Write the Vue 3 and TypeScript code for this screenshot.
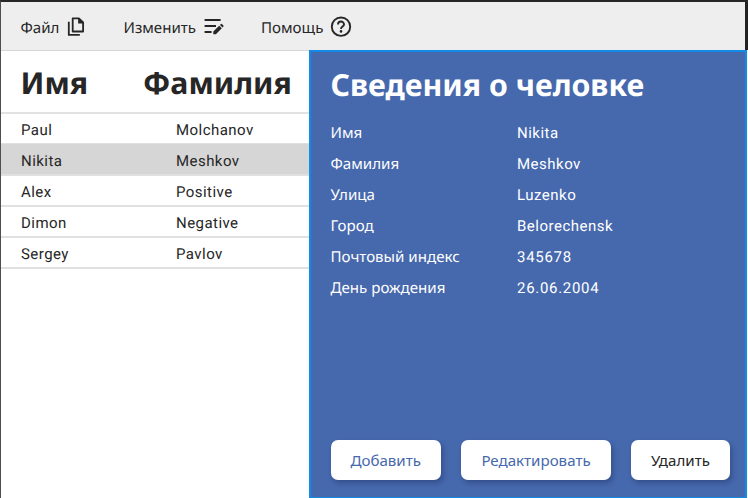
<script setup lang="ts">
import { ref } from 'vue'

interface Person {
  name: string
  surname: string
  street: string
  city: string
  postal: string
  birthday: string
}

const people: Person[] = [
  { name: 'Paul', surname: 'Molchanov', street: '', city: '', postal: '', birthday: '' },
  { name: 'Nikita', surname: 'Meshkov', street: 'Luzenko', city: 'Belorechensk', postal: '345678', birthday: '26.06.2004' },
  { name: 'Alex', surname: 'Positive', street: '', city: '', postal: '', birthday: '' },
  { name: 'Dimon', surname: 'Negative', street: '', city: '', postal: '', birthday: '' },
  { name: 'Sergey', surname: 'Pavlov', street: '', city: '', postal: '', birthday: '' },
]

const fields: { key: keyof Person; label: string }[] = [
  { key: 'name', label: 'Имя' },
  { key: 'surname', label: 'Фамилия' },
  { key: 'street', label: 'Улица' },
  { key: 'city', label: 'Город' },
  { key: 'postal', label: 'Почтовый индекс' },
  { key: 'birthday', label: 'День рождения' },
]

const selected = ref(1)
</script>

<template>
  <div class="screen">
    <header class="menu">
      <div class="item file">
        <span>Файл</span>
        <svg width="20" height="20" viewBox="0 0 20 20" fill="none" stroke="#262626" stroke-width="1.8">
          <path d="M5.7 1.3h6.2l4.2 4.2v9H5.7z" stroke-linejoin="round" />
          <path d="M11.1 1v5.4h5.4z" fill="#262626" stroke="none" />
          <path d="M1.8 4.8v13.1h11" stroke-linejoin="round" />
        </svg>
      </div>
      <div class="item edit">
        <span>Изменить</span>
        <svg width="20" height="20" viewBox="0 0 20 20" fill="none" stroke="#262626" stroke-width="2">
          <path d="M.6 3h16M.6 9h11.4M.6 15h7" />
          <path d="M9.3 14.6l5.9-5.9 2.6 2.6-5.9 5.9H9.3zM16 7.9l.9-.9q.5-.5 1 0l1.5 1.5q.5.5 0 1l-.9.9z" fill="#262626" stroke="none" />
        </svg>
      </div>
      <div class="item help">
        <span>Помощь</span>
        <svg width="22" height="22" viewBox="0 0 22 22" fill="none" stroke="#262626" stroke-width="1.9">
          <circle cx="11" cy="10.7" r="9.2" />
          <path d="M8 8.5a3 3 0 1 1 6 0c0 2-3 2.2-3 4.4" />
          <circle cx="11" cy="15.4" r="1.3" fill="#262626" stroke="none" />
        </svg>
      </div>
    </header>
    <main class="body">
      <section class="people">
        <div class="head">
          <h1>Имя</h1>
          <h1>Фамилия</h1>
        </div>
        <div
          v-for="(p, i) in people"
          :key="p.surname"
          class="row"
          :class="{ active: i === selected }"
          @click="selected = i"
        >
          <span>{{ p.name }}</span>
          <span>{{ p.surname }}</span>
        </div>
      </section>
      <section class="details">
        <h2>Сведения о человке</h2>
        <dl>
          <div v-for="f in fields" :key="f.key" class="field">
            <dt>{{ f.label }}</dt>
            <dd :class="f.key">{{ people[selected][f.key] }}</dd>
          </div>
        </dl>
        <div class="actions">
          <button class="add">Добавить</button>
          <button class="change">Редактировать</button>
          <button class="remove">Удалить</button>
        </div>
      </section>
    </main>
  </div>
</template>

<style>
body {
  overflow: hidden;
}
</style>

<style scoped>
* {
  box-sizing: border-box;
}
.screen {
  width: 748px;
  height: 498px;
  display: flex;
  flex-direction: column;
  background: #fff;
  border-left: 1px solid #4e4e4e;
  border-top: 2px solid #292627;
  color: #262626;
  font-family: "Noto Sans", sans-serif;
  font-size: 15.1px;
  text-rendering: geometricPrecision;
}
.menu {
  height: 48px;
  flex: none;
  display: flex;
  padding-left: 19.5px;
  background: #eee;
  border-right: 3px solid #222;
}
.item {
  display: flex;
  align-items: center;
  height: 50px;
  white-space: nowrap;
}
.item span {
  padding-top: 1px;
}
.item svg {
  flex: none;
}
.file {
  width: 103px;
  gap: 7.5px;
}
.edit {
  width: 137.5px;
  gap: 7.5px;
}
.help {
  gap: 6.5px;
}
.body {
  display: flex;
  flex: 1;
  min-height: 0;
}
.people {
  width: 308px;
  flex: none;
  border-top: 1px solid #d6d6d6;
}
.head {
  height: 63px;
  display: grid;
  grid-template-columns: 122.5px 1fr;
  align-items: center;
  padding: 3px 0 0 19.5px;
  border-bottom: 2px solid #e2e2e2;
}
h1,
h2 {
  margin: 0;
  font-size: 30.3px;
  font-weight: 700;
  line-height: 40px;
  white-space: nowrap;
}
.row {
  height: 31px;
  display: grid;
  grid-template-columns: 155px 1fr;
  align-items: center;
  padding: 2px 0 0 20px;
  border-bottom: 2px solid #e0e0e0;
  font-family: Roboto, sans-serif;
  font-size: 15px;
  letter-spacing: 0.45px;
}
.row.active {
  background: #d6d6d6;
  box-shadow: 0 -1px #d6d6d6;
}
.details {
  flex: 1;
  display: flex;
  flex-direction: column;
  margin-right: 1px;
  padding: 13px 15px 17px 19.5px;
  background: #4668ad;
  border: 2px solid #108ce6;
  border-bottom-width: 1px;
  color: #fff;
}
dl {
  margin: 12px 0 0;
}
.field {
  height: 31px;
  display: grid;
  grid-template-columns: 186.5px 1fr;
  align-items: center;
}
dd {
  margin: 0;
  padding-top: 1px;
  font-family: Roboto, sans-serif;
  font-size: 15px;
  letter-spacing: 0.5px;
}
.postal,
.birthday {
  letter-spacing: 0.7px;
}
.actions {
  display: flex;
  gap: 20px;
  margin-top: auto;
}
button {
  height: 40px;
  padding: 0;
  border: 0;
  border-radius: 7px;
  background: #fff;
  box-shadow: 2px 3px 5px rgba(20, 35, 75, 0.35);
  color: #4668ad;
  font: inherit;
}
.add {
  width: 110.5px;
}
.change {
  width: 150px;
}
.remove {
  width: 99px;
  color: #262626;
}
</style>
